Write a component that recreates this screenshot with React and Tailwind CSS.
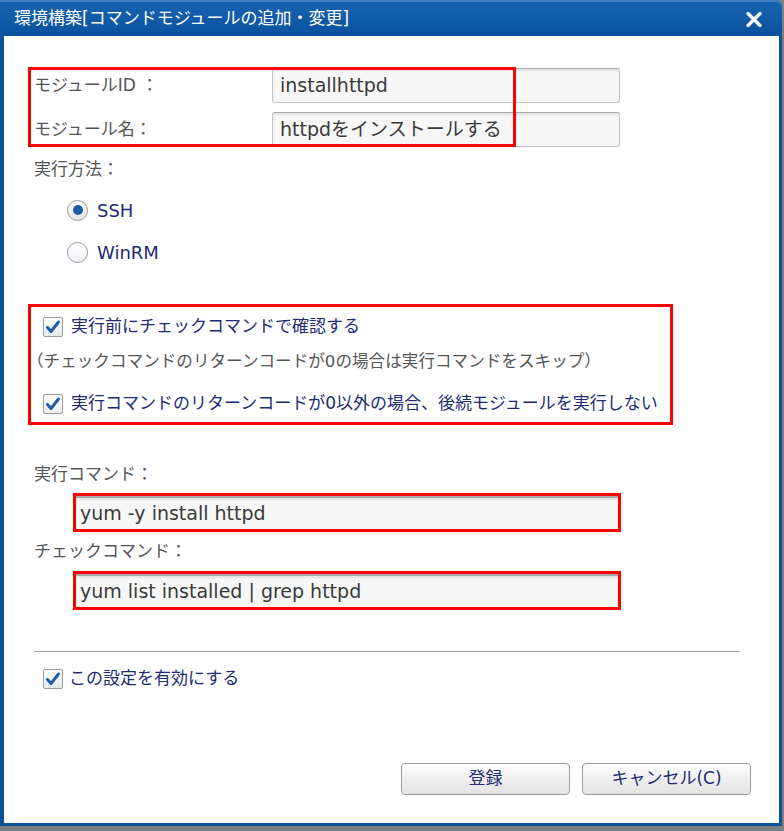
import React from 'react';

// Checkbox drawn as in the old Windows-style dialog
function Check() {
  return (
    <span className="flex h-[20px] w-[20px] shrink-0 items-center justify-center rounded-[2px] border border-[#9c9c9c] bg-gradient-to-b from-[#ffffff] to-[#e9ecef]">
      <svg width="16" height="16" viewBox="0 0 16 16">
        <path d="M2.5 8.5 L6 12.5 L13.5 3" fill="none" stroke="#1d5ea8" strokeWidth="3" strokeLinecap="round" strokeLinejoin="round" />
      </svg>
    </span>
  );
}

function Radio({ checked }) {
  return (
    <span
      className={`flex h-[21px] w-[21px] shrink-0 items-center justify-center rounded-full border border-[#9a9a9a] ${
        checked ? 'bg-gradient-to-b from-[#ffffff] to-[#e4e4e4]' : 'bg-gradient-to-b from-[#ffffff] to-[#eef1f6]'
      }`}
    >
      {checked && <span className="h-[10px] w-[10px] rounded-full bg-[#1b5da6]" />}
    </span>
  );
}

function Field({ value, className = '' }) {
  return (
    <div
      className={`flex items-center rounded-[3px] border border-[#c4c4c4] border-t-[#a8a8a8] bg-[#f7f7f7] shadow-[inset_0_2px_2px_rgba(0,0,0,0.08)] text-[19px] text-[#3a3a3a] ${className}`}
    >
      {value}
    </div>
  );
}

export default function App() {
  return (
    <div className="h-[831px] w-[784px] overflow-hidden bg-[#7c7f84] font-['DejaVu_Sans','Noto_Sans_CJK_JP',sans-serif]">
      <div className="flex h-[826px] w-[782px] flex-col rounded-tr-[7px] bg-[#0d519b]">
        {/* Title bar */}
        <div className="flex h-[36px] shrink-0 items-center justify-between rounded-tr-[7px] border-t-2 border-[#3f80c4] bg-gradient-to-b from-[#1763b0] to-[#0b529e] pl-[14px] pr-[20px]">
          <span className="text-[17px] text-white">環境構築[コマンドモジュールの追加・変更]</span>
          <svg width="16" height="15" viewBox="0 0 16 15">
            <path d="M2 1.5 L14 13.5 M14 1.5 L2 13.5" stroke="#ffffff" strokeWidth="3.2" strokeLinecap="round" />
          </svg>
        </div>

        {/* Body */}
        <div className="relative mb-[3px] ml-[4px] mr-[3px] flex flex-1 flex-col bg-white pl-[24px] text-[17px]">
          {/* red annotation over module id/name */}
          <div className="pointer-events-none absolute left-[24px] top-[31px] h-[80px] w-[488px] border-[3px] border-[#ff0000]" />

          <div className="mt-[32px] flex h-[35px] items-center">
            <span className="ml-[6px] w-[238px] text-[#555555]">モジュールID ：</span>
            <Field value="installhttpd" className="h-[35px] w-[348px] pl-[7px]" />
          </div>
          <div className="mt-[9px] flex h-[35px] items-center">
            <span className="ml-[6px] w-[238px] text-[#555555]">モジュール名：</span>
            <Field value="httpdをインストールする" className="h-[35px] w-[348px] pl-[7px]" />
          </div>

          <div className="ml-[6px] mt-[11px] flex h-[24px] items-center text-[#555555]">実行方法：</div>

          <div className="ml-[39px] mt-[14px] flex h-[28px] items-center gap-[9px]">
            <Radio checked />
            <span className="text-[18px] text-[#222a72]">SSH</span>
          </div>
          <div className="ml-[39px] mt-[14px] flex h-[28px] items-center gap-[9px]">
            <Radio />
            <span className="text-[18px] text-[#222a72]">WinRM</span>
          </div>

          {/* check options */}
          <div className="mt-[38px] flex w-[645px] flex-col border-[3px] border-[#ff0000] pb-[6px] pl-[12px] pt-[8px]">
            <div className="flex h-[24px] items-center gap-[8px]">
              <Check />
              <span className="text-[#222a72]">実行前にチェックコマンドで確認する</span>
            </div>
            <div className="ml-[-16px] mt-[11px] flex h-[24px] items-center whitespace-nowrap text-[16.6px] text-[#555555]">
              （チェックコマンドのリターンコードが0の場合は実行コマンドをスキップ）
            </div>
            <div className="mt-[18px] flex h-[24px] items-center gap-[8px]">
              <Check />
              <span className="whitespace-nowrap text-[#222a72]">実行コマンドのリターンコードが0以外の場合、後続モジュールを実行しない</span>
            </div>
          </div>

          <div className="ml-[6px] mt-[38px] flex h-[24px] items-center text-[#555555]">実行コマンド：</div>
          <div className="ml-[45px] mt-[6px] w-[548px] border-[3px] border-[#ff0000]">
            <Field value="yum -y install httpd" className="h-[33px] rounded-none border-0 border-t-2 pl-[4px]" />
          </div>

          <div className="ml-[6px] mt-[8px] flex h-[24px] items-center text-[#555555]">チェックコマンド：</div>
          <div className="ml-[45px] mt-[7px] w-[548px] border-[3px] border-[#ff0000]">
            <Field value="yum list installed | grep httpd" className="h-[33px] rounded-none border-0 border-t-2 pl-[4px]" />
          </div>

          <div className="ml-[6px] mt-[41px] h-px w-[706px] bg-[#a6a6a6]" />

          <div className="ml-[15px] mt-[15px] flex h-[24px] items-center gap-[6px]">
            <Check />
            <span className="text-[#222a72]">この設定を有効にする</span>
          </div>

          <div className="mt-[72px] flex justify-end gap-[12px] pr-[28px]">
            <button className="flex h-[32px] w-[169px] items-center justify-center rounded-[4px] border border-[#9c9c9c] bg-gradient-to-b from-[#fdfdfd] to-[#e3e3e3] text-[17px] text-[#222a72]">
              登録
            </button>
            <button className="flex h-[32px] w-[169px] items-center justify-center rounded-[4px] border border-[#9c9c9c] bg-gradient-to-b from-[#fdfdfd] to-[#e3e3e3] text-[17px] text-[#222a72]">
              キャンセル(C)
            </button>
          </div>
        </div>
      </div>
    </div>
  );
}
